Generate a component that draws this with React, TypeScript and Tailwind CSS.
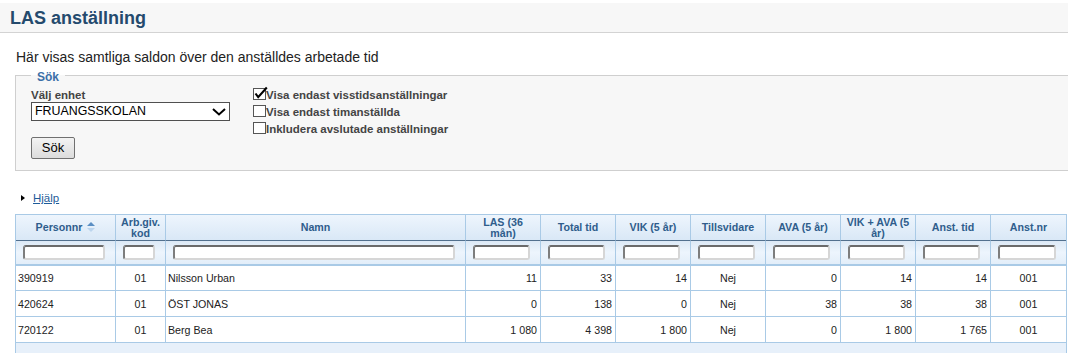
import React from "react";

type Row = {
  pnr: string;
  kod: string;
  namn: string;
  las: string;
  tot: string;
  vik: string;
  tills: string;
  ava: string;
  vikava: string;
  anst: string;
  nr: string;
};

const rows: Row[] = [
  { pnr: "390919", kod: "01", namn: "Nilsson Urban", las: "11", tot: "33", vik: "14", tills: "Nej", ava: "0", vikava: "14", anst: "14", nr: "001" },
  { pnr: "420624", kod: "01", namn: "ÖST JONAS", las: "0", tot: "138", vik: "0", tills: "Nej", ava: "38", vikava: "38", anst: "38", nr: "001" },
  { pnr: "720122", kod: "01", namn: "Berg Bea", las: "1 080", tot: "4 398", vik: "1 800", tills: "Nej", ava: "0", vikava: "1 800", anst: "1 765", nr: "001" },
];

const widths = [100, 50, 300, 75, 75, 75, 75, 75, 75, 75, 75];
const headers = [
  "Personnr",
  "Arb.giv. kod",
  "Namn",
  "LAS (36 mån)",
  "Total tid",
  "VIK (5 år)",
  "Tillsvidare",
  "AVA (5 år)",
  "VIK + AVA (5 år)",
  "Anst. tid",
  "Anst.nr",
];

function SortIcon() {
  return (
    <svg width="8" height="10" viewBox="0 0 8 10" className="inline-block ml-[5px] align-[-1px]">
      <polygon points="0,4 4,0 8,4" fill="#5b8fc4" />
      <polygon points="0,6 8,6 4,10" fill="#bcd5ee" />
    </svg>
  );
}

function Check({ checked, label }: { checked?: boolean; label: string }) {
  return (
    <div className="flex items-start h-[17px] leading-[17px]">
      <span className="relative mt-[1px] w-[13px] h-[12px] border border-[#555] bg-white shrink-0">
        {checked && (
          <svg width="14" height="13" viewBox="0 0 14 13" className="absolute left-[0px] top-[-2px] overflow-visible">
            <path d="M1.5 6.5 L4.2 10.2 L12.8 0.5" fill="none" stroke="#000" strokeWidth="2.1" />
          </svg>
        )}
      </span>
      <span className="text-[11.5px] font-bold text-[#444]">{label}</span>
    </div>
  );
}

export default function App() {
  const cellBorder = "border-r border-b border-[#a9cae6]";
  const right = `${cellBorder} text-right pr-[3px]`;
  const center = `${cellBorder} text-center`;
  const left = `${cellBorder} text-left pl-[2px]`;
  return (
    <div
      className="w-[1068px] h-[353px] overflow-hidden bg-white text-[#222]"
      style={{ fontFamily: '"Liberation Sans", Arial, sans-serif' }}
    >
      {/* Title bar */}
      <div className="mt-[3px] h-[30px] bg-[#f7f7f7] border-b border-[#d3d3d3] pl-[10px] pt-[2px]">
        <h1 className="text-[18px] leading-[27px] font-bold text-[#244a6d]">LAS anställning</h1>
      </div>

      <p className="mt-[16px] pl-[16px] text-[14px] leading-[17px] text-[#222]">
        Här visas samtliga saldon över den anställdes arbetade tid
      </p>

      {/* Search fieldset */}
      <fieldset className="mt-[1px] ml-[15px] w-[1070px] border border-[#cfcfcf] bg-[#f7f7f7] px-[15px] pt-[3px] pb-[11px]">
        <legend className="px-[6px] pt-[3px] leading-[14px] text-[12px] font-bold text-[#3b6fa8]">Sök</legend>
        <div className="flex items-start">
          <div className="w-[222px] shrink-0">
            <div className="mt-[1px] text-[11.5px] leading-[14px] font-bold text-[#444]">Välj enhet</div>
            <div className="flex items-center justify-between w-[199px] h-[19px] border border-[#505050] bg-white pl-[3px] pr-[3px]">
              <span className="text-[12.4px] text-black leading-[17px]">FRUANGSSKOLAN</span>
              <svg width="14" height="8" viewBox="0 0 14 8">
                <path d="M1 1 L7 6.5 L13 1" fill="none" stroke="#000" strokeWidth="2" />
              </svg>
            </div>
            <button className="mt-[16px] w-[44px] h-[22px] border border-[#707070] rounded-[2px] bg-linear-to-b from-[#f3f3f3] to-[#dcdcdc] text-[13px] text-black leading-[20px]">
              Sök
            </button>
          </div>
          <div>
            <Check checked label="Visa endast visstidsanställningar" />
            <Check label="Visa endast timanställda" />
            <Check label="Inkludera avslutade anställningar" />
          </div>
        </div>
      </fieldset>

      {/* Help link */}
      <div className="mt-[20px] h-[14px] flex items-center pl-[21px]">
        <span className="w-0 h-0 border-y-[3.5px] border-y-transparent border-l-[4px] border-l-black" />
        <a className="ml-[8px] text-[11.5px] leading-[14px] text-[#1f5c99] underline">Hjälp</a>
      </div>

      {/* Table */}
      <div className="mt-[9px] ml-[15px] w-[1052px] border-l border-r border-t border-[#a9cae6] bg-[#e7f0fa] h-[200px]">
        <table className="table-fixed border-separate border-spacing-0 w-[1050px] text-[10.67px]">
          <colgroup>
            {widths.map((w, i) => (
              <col key={i} style={{ width: w }} />
            ))}
          </colgroup>
          <thead>
            <tr>
              {headers.map((h, i) => (
                <th
                  key={h}
                  className={`h-[26px] px-[4px] font-bold leading-[11px] text-[#2f5d8c] text-center align-middle bg-linear-to-b from-[#eef5fd] to-[#d9e8f6] border-b border-b-[#52708e] ${
                    i < headers.length - 1 ? "border-r border-r-[#a9cae6]" : ""
                  }`}
                >
                  {h}
                  {i === 0 && <SortIcon />}
                </th>
              ))}
            </tr>
            <tr>
              {headers.map((h, i) => (
                <td
                  key={h}
                  className={`h-[25px] pl-[7px] pr-[10px] align-middle bg-linear-to-b from-[#dce9f6] via-[#edf5fd] to-[#e3eef9] border-b-2 border-b-[#a9cae6] ${
                    i < headers.length - 1 ? "border-r border-r-[#a9cae6]" : ""
                  }`}
                >
                  <div className="h-[15px] w-full rounded-[3px] bg-white border-2 border-t-[#6b6b6b] border-l-[#7d7d7d] border-r-[#d6d6d6] border-b-[#d6d6d6]" />
                </td>
              ))}
            </tr>
          </thead>
          <tbody className="bg-white text-[#222]">
            {rows.map((r, idx) => (
              <tr key={r.pnr}>
                <td className={`${left} ${idx === 0 ? "h-[25px]" : "h-[26px]"}`}>{r.pnr}</td>
                <td className={center}>{r.kod}</td>
                <td className={left}>{r.namn}</td>
                <td className={right}>{r.las}</td>
                <td className={right}>{r.tot}</td>
                <td className={right}>{r.vik}</td>
                <td className={center}>{r.tills}</td>
                <td className={right}>{r.ava}</td>
                <td className={right}>{r.vikava}</td>
                <td className={right}>{r.anst}</td>
                <td className="border-b border-[#a9cae6] text-center">{r.nr}</td>
              </tr>
            ))}
          </tbody>
        </table>
      </div>
    </div>
  );
}
